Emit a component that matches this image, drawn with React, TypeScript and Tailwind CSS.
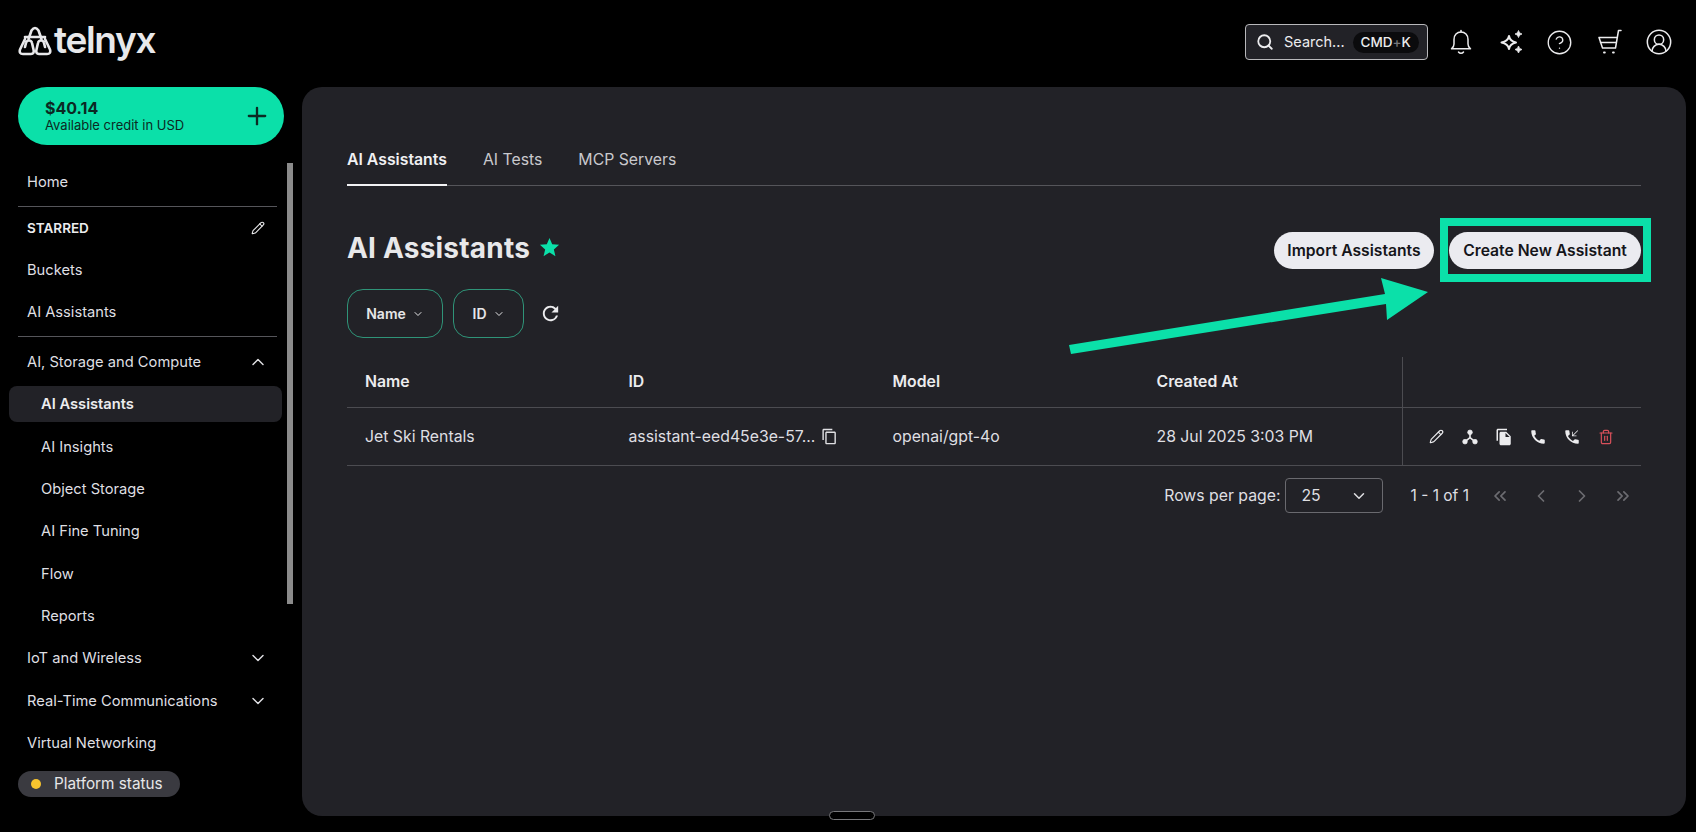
import { ChevronDown, ChevronUp, ChevronLeft, ChevronRight, ChevronsLeft, ChevronsRight, CircleHelp, CircleUserRound, Pencil, Plus, Search, Trash2 } from "lucide-react";
import { MdCall, MdFileCopy, MdOutlineContentCopy, MdPhoneCallback, MdRefresh, MdStar } from "react-icons/md";

const columns = ["Name", "ID", "Model", "Created At"];

function TelnyxLogo() {
  return (
    <div className="flex items-center gap-[2px] text-[#e8e8ea]">
      <svg viewBox="0 0 34 30" className="w-[34px] h-[30px]" fill="none" stroke="currentColor" strokeWidth="2.6" strokeLinejoin="round" strokeLinecap="round">
        <path d="M10.500 13 L13.500 4.500 Q17 -0.500 20.500 4.500 L23.500 13" />
        <path d="M7 13 L2 23.500 Q0.800 28 5 28 H13 Q16.500 28 15.500 23.500 L14 17 Q13.500 14.500 11 14.500 Q8.500 14.500 8 17 L7 21" />
        <path d="M27 13 L32 23.500 Q33.200 28 29 28 H21 Q17.500 28 18.500 23.500 L20 17 Q20.500 14.500 23 14.500 Q25.500 14.500 26 17 L27 21" />
        <path d="M7 11 H27" />
      </svg>
      <span className="font-['Inter',sans-serif] text-[37px] leading-none font-semibold tracking-[-1.300px] mt-[-3px]">telnyx</span>
    </div>
  );
}

function BellIcon() {
  return (
    <svg viewBox="0 0 24 26" className="w-[25px] h-[27px]" fill="none" stroke="currentColor" strokeWidth="1.500" strokeLinecap="round" strokeLinejoin="round">
      <path d="M12 2.500c-4 0-7 3-7 7.400v4.600c0 2.200-1 3.600-2.500 4.800h19c-1.500-1.200-2.500-2.600-2.500-4.800V9.900c0-4.400-3-7.400-7-7.400z" />
      <path d="M12 1v1.500" />
      <path d="M9.500 22.500c.7.900 1.500 1.300 2.500 1.300s1.800-.4 2.500-1.300" />
    </svg>
  );
}

function SparkleIcon() {
  return (
    <svg viewBox="0 0 26 26" className="w-[28px] h-[28px]" fill="none" stroke="currentColor" strokeLinejoin="round">
      <path strokeWidth="2" d="M10 7 Q11 12.300 17 13.500 Q11 14.700 10 20 Q9 14.700 2.500 13.500 Q9 12.300 10 7z" />
      <path fill="currentColor" strokeWidth="0.800" d="M19.500 1.500 Q20 4.500 23 5 Q20 5.500 19.500 8.500 Q19 5.500 16 5 Q19 4.500 19.500 1.500z" />
      <path fill="currentColor" strokeWidth="0.800" d="M19.500 17 Q20 20 23 20.500 Q20 21 19.500 24 Q19 21 16 20.500 Q19 20 19.500 17z" />
    </svg>
  );
}

function CartIcon() {
  return (
    <svg viewBox="0 0 24 26" className="w-[24px] h-[26px]" fill="none" stroke="currentColor" strokeWidth="1.500" strokeLinecap="round" strokeLinejoin="round">
      <path d="M23 1.500 H20.500 L17.500 19 H4.500 L1 8.500 H19" />
      <path d="M2.500 13.500 H18.300" />
      <path d="M6 23.500 H6.800 M15 23.500 H15.800" strokeWidth="2" />
    </svg>
  );
}

function HubIcon() {
  return (
    <svg viewBox="0 0 24 24" className="w-[16px] h-[16px]" fill="currentColor" stroke="currentColor">
      <circle cx="12" cy="5" r="3.500" />
      <circle cx="4.500" cy="19" r="3.500" />
      <circle cx="19.500" cy="19" r="3.500" />
      <path d="M12 6 V13 L5 18.500 M12 13 L19 18.500" fill="none" strokeWidth="2.400" />
    </svg>
  );
}

function NavRow({ label, chevron, sub, active }: { label: string; chevron?: "up" | "down"; sub?: boolean; active?: boolean }) {
  if (active) {
    return (
      <div className="h-[42.4px] flex items-center">
        <div className="ml-[9px] w-[273px] shrink-0 h-[36px] rounded-lg bg-[#222227] flex items-center pl-[32px] text-[14.700px] font-semibold text-[#ececee]">
          {label}
        </div>
      </div>
    );
  }
  return (
    <div className={`h-[42.4px] flex items-center justify-between pr-[9px] text-[14.700px] text-[#dfdfe2] ${sub ? "pl-[41px]" : "pl-[27px]"}`}>
      <span>{label}</span>
      {chevron === "up" && <ChevronUp size={20} strokeWidth={1.700} />}
      {chevron === "down" && <ChevronDown size={20} strokeWidth={1.700} />}
    </div>
  );
}

function Sidebar() {
  return (
    <aside className="relative w-[302px] shrink-0">
      <div className="ml-[18px] w-[266px] h-[58px] rounded-full bg-[#0be0a9] flex items-center justify-between pl-[27px] pr-[13px] text-[#0b2a23]">
        <div className="mt-[1px]">
          <div className="text-[16px] leading-[18px] font-bold">$40.14</div>
          <div className="text-[13px] leading-[17px]">Available credit in USD</div>
        </div>
        <Plus size={28} strokeWidth={2} />
      </div>

      <div className="absolute left-[287px] top-[76px] w-[6px] h-[441px] bg-[#8b8b8b]" />

      <nav className="w-[277px] mt-[16px]">
        <NavRow label="Home" />
        <div className="ml-[18px] mt-[3px] border-t border-[#55555a]" />
        <div className="h-[41.4px] flex items-center justify-between pl-[27px] pr-[12px] text-[13.500px] font-semibold text-[#ececee]">
          <span>STARRED</span>
          <Pencil size={14} strokeWidth={1.800} />
        </div>
        <NavRow label="Buckets" />
        <NavRow label="AI Assistants" />
        <div className="ml-[18px] mt-[2px] mb-[4px] border-t border-[#55555a]" />
        <NavRow label="AI, Storage and Compute" chevron="up" />
        <NavRow label="AI Assistants" active />
        <NavRow label="AI Insights" sub />
        <NavRow label="Object Storage" sub />
        <NavRow label="AI Fine Tuning" sub />
        <NavRow label="Flow" sub />
        <NavRow label="Reports" sub />
        <NavRow label="IoT and Wireless" chevron="down" />
        <NavRow label="Real-Time Communications" chevron="down" />
        <NavRow label="Virtual Networking" />
      </nav>

      <div className="ml-[18px] mt-[7px] w-[162px] h-[26px] rounded-full bg-[#3a3a40] flex items-center pl-[13px] gap-[13px] text-[15.300px] text-[#e6e6e8]">
        <span className="w-[10px] h-[10px] rounded-full bg-[#f8c42e]" />
        Platform status
      </div>
    </aside>
  );
}

function Header() {
  return (
    <header className="h-[87px] shrink-0 flex items-start justify-between pl-[18px] pr-[23px] text-[#ececee]">
      <div className="pt-[24px]">
        <TelnyxLogo />
      </div>
      <div className="flex items-center pt-[24px]">
        <div className="w-[183px] h-[36px] rounded-[4px] border border-[#b8b8bb] bg-[#222227] flex items-center pl-[10px] text-[14.500px]">
          <Search size={18} strokeWidth={2.400} />
          <span className="ml-[10px]">Search...</span>
          <span className="ml-[8px] h-[21px] w-[66px] rounded-full bg-[#0b0b0d] flex items-center justify-center text-[13.500px] font-medium">
            CMD<span className="text-[#77777c]">+</span>K
          </span>
        </div>
        <div className="ml-[21px] w-[24px] flex justify-center"><BellIcon /></div>
        <div className="ml-[26px] w-[26px] flex justify-center"><SparkleIcon /></div>
        <div className="ml-[21px]"><CircleHelp size={27} strokeWidth={1.200} /></div>
        <div className="ml-[25px]"><CartIcon /></div>
        <div className="ml-[23px]"><CircleUserRound size={28} strokeWidth={1.300} /></div>
      </div>
    </header>
  );
}

function FilterButton({ label, width }: { label: string; width: string }) {
  return (
    <button className={`${width} h-[49px] rounded-[16px] border border-[#2f9478] flex items-center justify-center gap-[6px] text-[14px] font-semibold text-[#e6e6e8]`}>
      {label}
      <ChevronDown size={12} strokeWidth={2} />
    </button>
  );
}

function AssistantsTable() {
  return (
    <div className="mt-[19px] text-[15.800px] text-[#dfdfe2]">
      <div className="grid grid-cols-[263.500px_264px_264px_263.500px_1fr] h-[51px] border-b border-[#4c4c51] font-semibold text-[#ececee]">
        {columns.map((c) => (
          <div key={c} className="flex items-center pl-[18px]">{c}</div>
        ))}
        <div className="border-l border-[#4c4c51]" />
      </div>
      <div className="grid grid-cols-[263.500px_264px_264px_263.500px_1fr] h-[58px] border-b border-[#4c4c51]">
        <div className="flex items-center pl-[18px]">Jet Ski Rentals</div>
        <div className="flex items-center pl-[18px] gap-[6px] whitespace-nowrap">
          assistant-eed45e3e-57...
          <MdOutlineContentCopy size={17} />
        </div>
        <div className="flex items-center pl-[18px]">openai/gpt-4o</div>
        <div className="flex items-center pl-[18px]">28 Jul 2025 3:03 PM</div>
        <div className="border-l border-[#4c4c51] flex items-center pl-[16px] text-[#ececee]">
          <span className="w-[34px] flex justify-center"><Pencil size={15} strokeWidth={1.800} /></span>
          <span className="w-[34px] flex justify-center"><HubIcon /></span>
          <span className="w-[34px] flex justify-center"><MdFileCopy size={18} /></span>
          <span className="w-[34px] flex justify-center"><MdCall size={18} /></span>
          <span className="w-[34px] flex justify-center"><MdPhoneCallback size={18} /></span>
          <span className="w-[34px] flex justify-center text-[#d9505a]"><Trash2 size={16} strokeWidth={1.800} /></span>
        </div>
      </div>
    </div>
  );
}

function Pagination() {
  return (
    <div className="mt-[12px] flex items-center justify-end pr-[8px] text-[15.800px] text-[#dfdfe2]">
      <span>Rows per page:</span>
      <div className="ml-[5px] w-[98px] h-[35px] rounded-[4px] border border-[#6a6a6f] flex items-center justify-between pl-[15px] pr-[14px]">
        25
        <ChevronDown size={18} strokeWidth={2} />
      </div>
      <span className="ml-[27px] text-[15.500px]">1 - 1 of 1</span>
      <div className="ml-[21px] flex items-center gap-[21px] text-[#6c6c71]">
        <ChevronsLeft size={20} strokeWidth={2.100} />
        <ChevronLeft size={20} strokeWidth={2.100} />
        <ChevronRight size={20} strokeWidth={2.100} />
        <ChevronsRight size={20} strokeWidth={2.100} />
      </div>
    </div>
  );
}

function MainPanel() {
  return (
    <main className="flex-1 mr-[10px] mb-[16px] rounded-[20px] bg-[#222227] pl-[45px] pr-[45px] pt-[52px]">
      <div className="flex items-start gap-[36px] h-[47px] border-b border-[#55555a] text-[15.800px] text-[#c9c9cd]">
        <div className="h-[47px] pt-[9px] border-b-[2px] border-[#f2f2f4] font-semibold text-[#f0f0f2]">AI Assistants</div>
        <div className="pt-[9px]">AI Tests</div>
        <div className="pt-[9px]">MCP Servers</div>
      </div>

      <div className="mt-[46px] h-[37px] flex items-center justify-between">
        <div className="flex items-center gap-[8px] pb-[6px]">
          <h1 className="text-[28px] leading-none font-bold text-[#e8e8ea] tracking-[0.200px]">AI Assistants</h1>
          <MdStar size={23} className="text-[#0be0a9]" />
        </div>
        <div className="flex items-center gap-[15px] text-[15.700px] font-semibold text-[#15151a]">
          <button className="w-[160px] h-[37px] rounded-full bg-[#ebebf0]">Import Assistants</button>
          <button className="w-[192px] h-[37px] rounded-full bg-[#ebebf0]">Create New Assistant</button>
        </div>
      </div>

      <div className="mt-[20px] flex items-center gap-[10px]">
        <FilterButton label="Name" width="w-[96px]" />
        <FilterButton label="ID" width="w-[71px]" />
        <MdRefresh size={23} className="ml-[5px] text-[#ececee]" />
      </div>

      <AssistantsTable />
      <Pagination />
    </main>
  );
}

export default function App() {
  return (
    <div className="relative w-[1696px] h-[832px] overflow-hidden bg-black flex flex-col font-['Inter',sans-serif]">
      <Header />
      <div className="flex flex-1 min-h-0">
        <Sidebar />
        <MainPanel />
      </div>

      {/* annotation drawn on top of the screenshot */}
      <div className="absolute left-[1440px] top-[218px] w-[211px] h-[64px] border-[8px] border-[#0be0a9]" />
      <svg className="absolute left-[1060px] top-[270px] w-[380px] h-[90px]" viewBox="0 0 380 90">
        <polygon fill="#0be0a9" points="9,75 11,84 326,34 327,50 368,22 321,8 325,24" />
      </svg>

      {/* window handle */}
      <div className="absolute left-[829px] top-[811px] w-[46px] h-[9px] rounded-full bg-black border border-[#77777a]" />
    </div>
  );
}
